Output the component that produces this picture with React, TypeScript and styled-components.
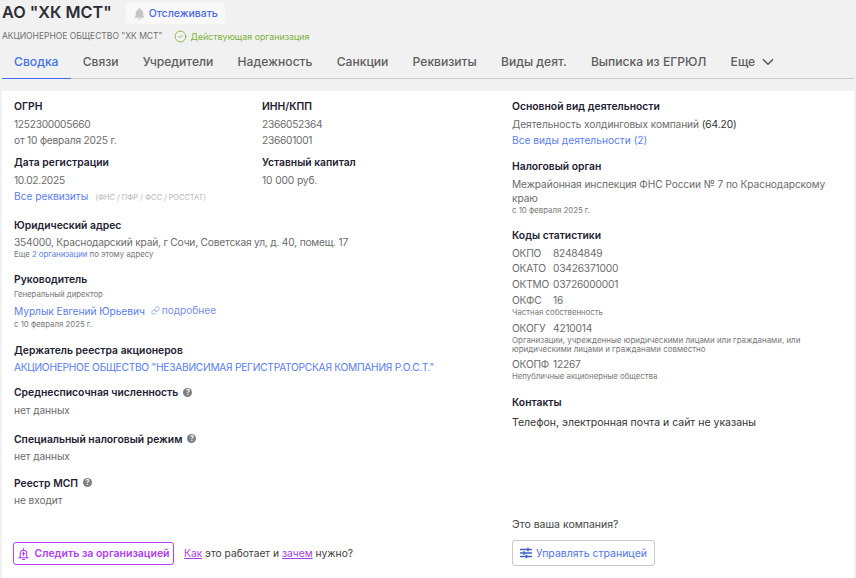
import React from "react";
import styled, { createGlobalStyle } from "styled-components";
import { ChevronDown, CircleCheck, Link as LinkIcon } from "lucide-react";

const Global = createGlobalStyle`
  html, body { margin: 0; padding: 0; background: #f1f1f1; }
  body { font-family: Inter, "Noto Sans", sans-serif; color: #1f2533; }
  * { box-sizing: border-box; }
`;

const Page = styled.div`
  width: 856px; height: 578px; overflow: hidden;
  display: flex; flex-direction: column; background: #f1f1f1;
`;
const Header = styled.header`padding: 0 2px;`;
const TitleRow = styled.div`display: flex; align-items: center; height: 24px; gap: 14px;`;
const Title = styled.h1`
  margin: 0; font-size: 16.25px; line-height: 24px; font-weight: 600; color: #2b2d33; white-space: nowrap;
`;
const WatchButton = styled.button`
  height: 21px; margin-top: 2px; width: 99px; padding: 0 0 0 7px; border: 0; border-radius: 3px; background: #f8f8f8;
  display: flex; align-items: center; gap: 3px; font: 500 10.5px Inter, sans-serif; color: #4a68e8;
`;
const SubRow = styled.div`display: flex; align-items: center; height: 24px; gap: 12px;`;
const LegalName = styled.span`font-size: 8.5px; color: #6f6f6f; white-space: nowrap;`;
const Status = styled.span`display: flex; align-items: center; gap: 3px; font-size: 8.85px; color: #7db33c; white-space: nowrap; svg { color: #6fae34; }`;
const Tabs = styled.nav`
  display: flex; height: 31px; border-bottom: 1px solid #c9c9c9; align-items: stretch;
`;
const Tab = styled.a<{ $active?: boolean }>`
  padding: 0 12.1px 3px; display: flex; align-items: center; gap: 4px; margin-bottom: -1px;
  font-size: 12.1px; font-weight: 500; white-space: nowrap;
  color: ${p => (p.$active ? "#3f72ee" : "#5d5d5d")};
  border-bottom: 1px solid ${p => (p.$active ? "#3f72ee" : "transparent")};
`;
const Card = styled.main`
  flex: 1; margin: 12px 2px 0; background: #fff; padding: 7px 15px 12px 12px;
  display: grid; grid-template-columns: 498px 1fr;
`;
const Column = styled.div`display: flex; flex-direction: column; min-width: 0;`;
const Pair = styled.div`display: grid; grid-template-columns: 248px 1fr;`;
const Block = styled.section<{ $top?: number }>`margin-top: ${p => p.$top ?? 0}px;`;
const Label = styled.h3`
  margin: 0 0 2px; display: flex; align-items: center; gap: 5px;
  font-size: 10.35px; line-height: 16px; font-weight: 600; color: #1d2130; white-space: nowrap;
`;
const Value = styled.div<{ $top?: number; $track?: number }>`
  margin-top: ${p => p.$top ?? 0}px;
  font-size: 10.2px; line-height: 16px; color: #6c6c6c; white-space: nowrap;
  letter-spacing: ${p => p.$track ?? -0.1}px;
`;
const Wrapped = styled(Value)`white-space: normal; line-height: 14px; margin-top: 3px;`;
const Contact = styled(Value)`font-size: 10.5px; letter-spacing: 0; color: #333;`;
const Dark = styled.span`color: #333;`;
const Link = styled.a`color: #5a7df0;`;
const Faint = styled.span`margin-left: 7px; font-size: 7.4px; letter-spacing: 0; color: #b4b4b4;`;
const Small = styled.div<{ $top?: number }>`
  margin-top: ${p => p.$top ?? 0}px;
  font-size: 7.8px; line-height: 12px; color: #777;
`;
const NoteList = styled(Small)`font-size: 7.95px; line-height: 9px; padding-right: 20px;`;
const More = styled.span`display: inline-flex; align-items: center; gap: 2px; margin-left: 6px; color: #7d8fef; svg { color: #8593d8; }`;
const Help = styled.span`
  width: 9px; height: 9px; border-radius: 50%; background: #7e8085; color: #fff;
  font-size: 7px; font-weight: 700; line-height: 9px; text-align: center; flex: none;
`;
const Code = styled.div<{ $gap?: number }>`
  display: grid; grid-template-columns: 41px 1fr; font-size: 10.2px; line-height: 16px; color: #6c6c6c;
  letter-spacing: -0.2px;
  margin-top: ${p => p.$gap ?? 0}px;
`;
const Footer = styled.div`margin-top: auto; display: flex; align-items: center; gap: 10px; margin-left: -1px; padding-bottom: 1px;`;
const FollowButton = styled.button`
  height: 23px; width: 161px; padding: 0; border: 1px solid #b545f0; border-radius: 3px; background: #fff;
  display: flex; align-items: center; justify-content: center; gap: 4px;
  font: 600 10.5px Inter, sans-serif; color: #b03df0; white-space: nowrap;
`;
const Hint = styled.span`margin-top: -2px; font-size: 10.25px; color: #3d3d3d; white-space: nowrap; a { color: #a640ea; text-decoration: underline; }`;
const Question = styled.div`margin-top: auto; font-size: 10.5px; line-height: 16px; color: #444;`;
const ManageButton = styled.button`
  margin-top: 7px; width: 143px; height: 26px; padding: 0; border: 1px solid #c9c9c9; border-radius: 3px; background: #fff;
  display: flex; align-items: center; justify-content: center; gap: 4px;
  font: 400 10.5px Inter, sans-serif; color: #4f74ee;
`;

const Bell = () => (
  <svg width="13" height="13" viewBox="0 0 24 24" fill="#c6c6c6">
    <path d="M12 2a2 2 0 0 0-2 2v.6A7 7 0 0 0 5 11v5l-2 3v1h18v-1l-2-3v-5a7 7 0 0 0-5-6.4V4a2 2 0 0 0-2-2z" />
    <path d="M9.5 21a2.5 2.5 0 0 0 5 0z" />
  </svg>
);

const BellWithPlus = () => (
  <svg width="13" height="14" viewBox="0 0 24 24" fill="none" stroke="currentColor" strokeWidth="2" strokeLinecap="round" strokeLinejoin="round">
    <path d="M12 2v2" />
    <path d="M6 19v-8a6 6 0 0 1 12 0v8" />
    <path d="M3 19h18" />
    <path d="M10 22h4" />
    <path d="M12 8.5v6M9 11.5h6" />
  </svg>
);

const Sliders = () => (
  <svg width="12" height="12" viewBox="0 0 24 24" fill="none" stroke="#3c5fc4" strokeWidth="2.6" strokeLinecap="round">
    <path d="M1 5h22M1 12h22M1 19h22" />
    <path d="M16 2.5v5M8 9.5v5M13 16.5v5" strokeWidth="3" />
  </svg>
);

export default function App() {
  return (
    <Page>
      <Global />
      <Header>
        <TitleRow>
          <Title>АО "ХК МСТ"</Title>
          <WatchButton><Bell />Отслеживать</WatchButton>
        </TitleRow>
        <SubRow>
          <LegalName>АКЦИОНЕРНОЕ ОБЩЕСТВО "ХК МСТ"</LegalName>
          <Status><CircleCheck size={13} strokeWidth={1.5} />Действующая организация</Status>
        </SubRow>
        <Tabs>
          <Tab $active>Сводка</Tab>
          <Tab>Связи</Tab>
          <Tab>Учредители</Tab>
          <Tab>Надежность</Tab>
          <Tab>Санкции</Tab>
          <Tab>Реквизиты</Tab>
          <Tab>Виды деят.</Tab>
          <Tab>Выписка из ЕГРЮЛ</Tab>
          <Tab>Еще <ChevronDown size={18} strokeWidth={2.2} /></Tab>
        </Tabs>
      </Header>
      <Card>
        <Column>
          <Pair>
            <div>
              <Label>ОГРН</Label>
              <Value $track={-0.28}>1252300005660</Value>
              <Value $track={-0.2}>от 10 февраля 2025 г.</Value>
            </div>
            <div>
              <Label>ИНН/КПП</Label>
              <Value $track={-0.28}>2366052364</Value>
              <Value $track={-0.28}>236601001</Value>
            </div>
            <Block $top={6}>
              <Label>Дата регистрации</Label>
              <Value $track={-0.28}>10.02.2025</Value>
            </Block>
            <Block $top={6}>
              <Label>Уставный капитал</Label>
              <Value>10 000 руб.</Value>
            </Block>
          </Pair>
          <Value $track={0}><Link>Все реквизиты</Link><Faint>(ФНС / ПФР / ФСС / РОССТАТ)</Faint></Value>
          <Block $top={10.5}>
            <Label>Юридический адрес</Label>
            <Value $top={-1} $track={-0.19}>354000, Краснодарский край, г Сочи, Советская ул, д. 40, помещ. 17</Value>
            <Small $top={-2}>Еще <Link>2 организации</Link> по этому адресу</Small>
          </Block>
          <Block $top={11}>
            <Label>Руководитель</Label>
            <Small $top={-0.5}>Генеральный директор</Small>
            <Value $top={2} $track={-0.05}><Link>Мурлык Евгений Юрьевич</Link><More><LinkIcon size={9} />подробнее</More></Value>
            <Small $top={-1}>с 10 февраля 2025 г.</Small>
          </Block>
          <Block $top={12}>
            <Label>Держатель реестра акционеров</Label>
            <Value $top={-0.5} $track={-0.26}><Link>АКЦИОНЕРНОЕ ОБЩЕСТВО "НЕЗАВИСИМАЯ РЕГИСТРАТОРСКАЯ КОМПАНИЯ Р.О.С.Т."</Link></Value>
          </Block>
          <Block $top={9}>
            <Label>Среднесписочная численность <Help>?</Help></Label>
            <Value>нет данных</Value>
          </Block>
          <Block $top={12.5}>
            <Label>Специальный налоговый режим <Help>?</Help></Label>
            <Value $top={-1}>нет данных</Value>
          </Block>
          <Block $top={11}>
            <Label>Реестр МСП <Help>?</Help></Label>
            <Value $top={-0.5}>не входит</Value>
          </Block>
          <Footer>
            <FollowButton><BellWithPlus />Следить за организацией</FollowButton>
            <Hint><a>Как</a> это работает и <a>зачем</a> нужно?</Hint>
          </Footer>
        </Column>
        <Column>
          <Label>Основной вид деятельности</Label>
          <Value>Деятельность холдинговых компаний <Dark>(64.20)</Dark></Value>
          <Value $track={0}><Link>Все виды деятельности (2)</Link></Value>
          <Block $top={10}>
            <Label>Налоговый орган</Label>
            <Wrapped>Межрайонная инспекция ФНС России № 7 по Краснодарскому краю</Wrapped>
            <Small $top={-1}>с 10 февраля 2025 г.</Small>
          </Block>
          <Block $top={11}>
            <Label>Коды статистики</Label>
            <Code>ОКПО<span>82484849</span></Code>
            <Code $gap={-1}>ОКАТО<span>03426371000</span></Code>
            <Code>ОКТМО<span>03726000001</span></Code>
            <Code>ОКФС<span>16</span></Code>
            <Small $top={-2}>Частная собственность</Small>
            <Code $gap={1.5}>ОКОГУ<span>4210014</span></Code>
            <NoteList>Организации, учрежденные юридическими лицами или гражданами, или юридическими лицами и гражданами совместно</NoteList>
            <Code $gap={2.5}>ОКОПФ<span>12267</span></Code>
            <Small $top={-2}>Непубличные акционерные общества</Small>
          </Block>
          <Block $top={11.5}>
            <Label>Контакты</Label>
            <Contact $top={5}>Телефон, электронная почта и сайт не указаны</Contact>
          </Block>
          <Question>Это ваша компания?</Question>
          <ManageButton><Sliders />Управлять страницей</ManageButton>
        </Column>
      </Card>
    </Page>
  );
}
